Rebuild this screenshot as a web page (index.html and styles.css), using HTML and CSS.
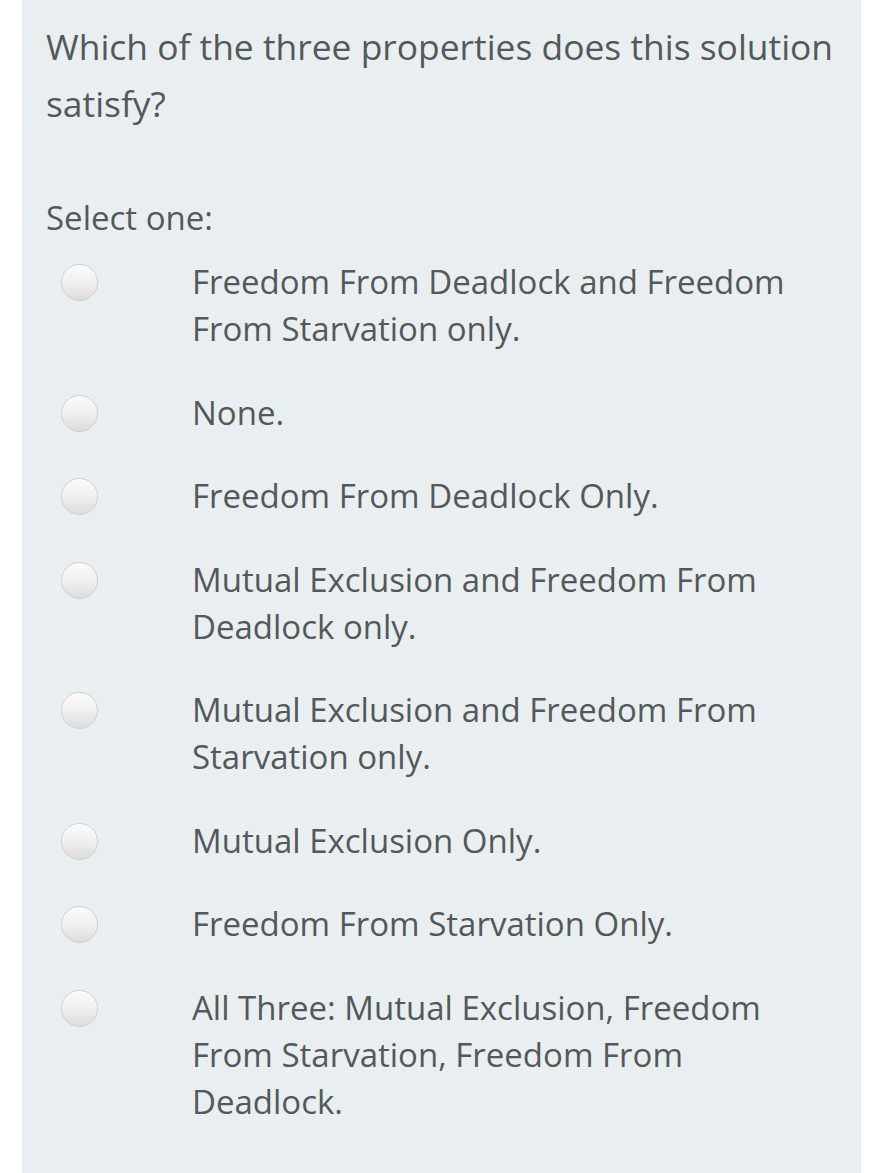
FILE: index.html
```html
<!DOCTYPE html>
<html>
<head>
<meta charset="utf-8">
<link rel="stylesheet" href="styles.css">
</head>
<body>
<div class="page">
  <div class="panel">
    <div class="qtext">Which of the three properties does this solution satisfy?</div>
    <div class="prompt">Select one:</div>
    <div class="answers">
      <label class="opt"><span class="radio"></span><span class="label">Freedom From Deadlock and Freedom From Starvation only.</span></label>
      <label class="opt"><span class="radio"></span><span class="label">None.</span></label>
      <label class="opt"><span class="radio"></span><span class="label">Freedom From Deadlock Only.</span></label>
      <label class="opt"><span class="radio"></span><span class="label">Mutual Exclusion and Freedom From Deadlock only.</span></label>
      <label class="opt"><span class="radio"></span><span class="label">Mutual Exclusion and Freedom From Starvation only.</span></label>
      <label class="opt"><span class="radio"></span><span class="label">Mutual Exclusion Only.</span></label>
      <label class="opt"><span class="radio"></span><span class="label">Freedom From Starvation Only.</span></label>
      <label class="opt"><span class="radio"></span><span class="label">All Three: Mutual Exclusion, Freedom From Starvation, Freedom From Deadlock.</span></label>
    </div>
  </div>
</div>
</body>
</html>
```

FILE: styles.css
```css
html, body {
  margin: 0;
  padding: 0;
  background: #ffffff;
}
body {
  font-family: "Open Sans", "Liberation Sans", sans-serif;
  color: #54585a;
  overflow: hidden;
}
.page {
  width: 894px;
  height: 1173px;
  padding-left: 22px;
  box-sizing: border-box;
}
.panel {
  width: 839px;
  height: 1173px;
  background: #e9eff0;
  box-sizing: border-box;
  padding: 18px 20px 0 24px;
}
.qtext {
  font-size: 35.4px;
  line-height: 57px;
}
.prompt {
  margin-top: 62px;
  font-size: 33px;
  line-height: 47px;
}
.answers {
  margin-top: 17px;
  display: flex;
  flex-direction: column;
  gap: 36.5px;
}
.opt {
  display: flex;
  align-items: flex-start;
}
.radio {
  flex: none;
  width: 35px;
  height: 35px;
  margin-left: 15px;
  margin-top: 6px;
  border-radius: 50%;
  border: 1px solid #cdcfd0;
  background: linear-gradient(to bottom, #fbfbfb 0%, #f1f1f1 45%, #dcdcdc 100%);
  box-shadow: inset 0 1px 1px rgba(255,255,255,0.9);
}
.label {
  margin-left: 94px;
  font-size: 33px;
  line-height: 47px;
  max-width: 620px;
}
```
